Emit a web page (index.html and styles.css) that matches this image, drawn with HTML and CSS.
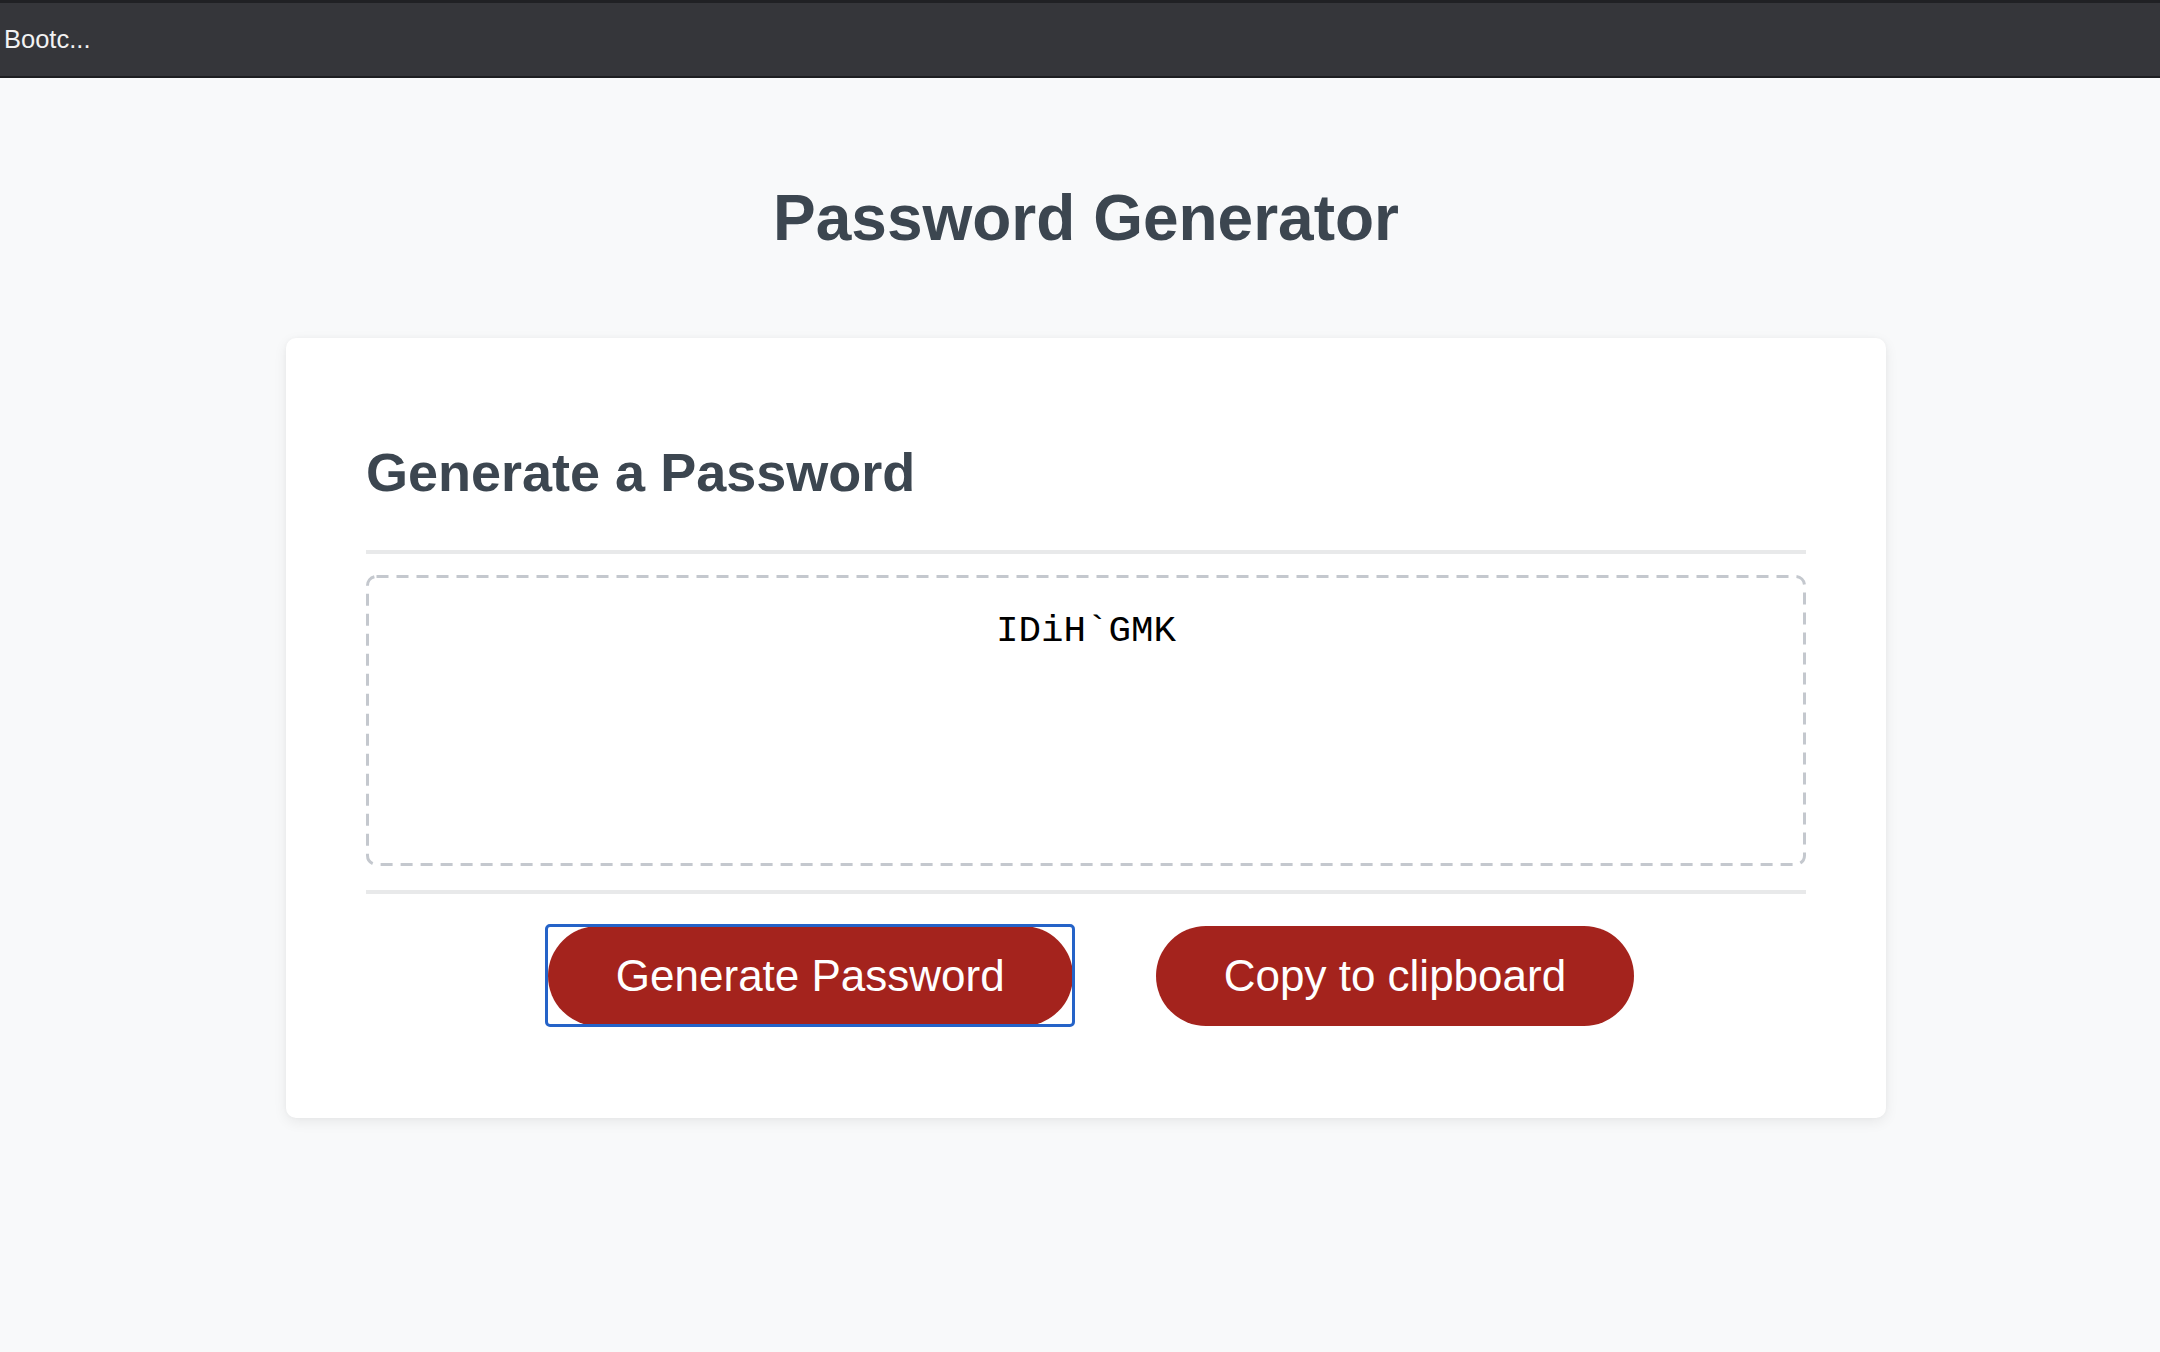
FILE: index.html
```html
<!DOCTYPE html>
<html lang="en">
<head>
<meta charset="utf-8">
<title>Password Generator</title>
<link rel="stylesheet" href="styles.css">
</head>
<body>
  <header class="topbar">
    <span class="tab-title">Bootc...</span>
  </header>
  <main class="container">
    <h1 class="page-title">Password Generator</h1>
    <section class="card">
      <h2 class="card-title">Generate a Password</h2>
      <hr class="rule rule-top">
      <div class="password-box">
        <svg class="dash-frame" width="1440" height="291" viewBox="0 0 1440 291" aria-hidden="true">
          <rect x="1.5" y="1.5" width="1437" height="288" rx="9" ry="9" fill="none" stroke="#c4c8ce" stroke-width="3" stroke-dasharray="12 8"/>
        </svg>
        <span class="password-text">IDiH`GMK</span>
      </div>
      <hr class="rule rule-bottom">
      <div class="actions">
        <button class="btn btn-focused" type="button">Generate Password</button>
        <button class="btn" type="button">Copy to clipboard</button>
      </div>
    </section>
  </main>
</body>
</html>
```

FILE: styles.css
```css
* {
  box-sizing: border-box;
}

html, body {
  margin: 0;
  padding: 0;
}

body {
  background: #f8f9fa;
  font-family: "Liberation Sans", Arial, Helvetica, sans-serif;
  min-height: 1352px;
}

.topbar {
  height: 78px;
  background: #35363a;
  border-top: 3px solid #202124;
  border-bottom: 2px solid #1d1e21;
  display: flex;
  align-items: center;
  padding-left: 4px;
}

.tab-title {
  color: #f2f2f2;
  font-size: 25.5px;
  line-height: 1;
}

.container {
  width: 1612px;
  margin: 0 auto;
  padding-left: 12px;
}

.page-title {
  margin: 102px 0 0;
  text-align: center;
  font-size: 64px;
  line-height: 1.2;
  font-weight: 700;
  color: #3c4650;
}

.card {
  margin-top: 81px;
  background: #ffffff;
  border-radius: 10px;
  padding: 80px 80px 80px;
  box-shadow: 0 4px 14px rgba(0, 0, 0, 0.07), 0 0 4px rgba(0, 0, 0, 0.03);
}

.card-title {
  margin: 22px 0 0;
  font-size: 54px;
  line-height: 1.2;
  font-weight: 700;
  color: #3c4650;
}

.rule {
  border: 0;
  height: 4px;
  background: #e8e9ea;
  margin: 0;
}

.rule-top {
  margin-top: 45px;
}

.password-box {
  position: relative;
  margin-top: 21px;
  height: 291px;
  padding: 34px 23px 0;
  text-align: center;
  font-family: "Liberation Mono", "DejaVu Sans Mono", monospace;
  font-size: 37.5px;
  line-height: 45px;
  color: #000000;
}

.dash-frame {
  position: absolute;
  top: 0;
  left: 0;
  display: block;
}

.password-text {
  position: relative;
}

.rule-bottom {
  margin-top: 24px;
}

.actions {
  margin-top: 32px;
  margin-bottom: 12px;
  display: flex;
  justify-content: center;
  gap: 83px;
  padding-left: 10px;
}

.btn {
  position: relative;
  height: 100px;
  padding: 0 68px;
  border: 0;
  border-radius: 50px;
  background: #a4231d;
  color: #ffffff;
  font-family: "Liberation Sans", Arial, Helvetica, sans-serif;
  font-size: 44px;
  line-height: 1;
  cursor: pointer;
}

.btn-focused::after {
  content: "";
  position: absolute;
  top: -2px;
  bottom: -1px;
  left: -3px;
  right: -2px;
  border: 3px solid #2563c8;
  border-radius: 5px;
  pointer-events: none;
}
```
